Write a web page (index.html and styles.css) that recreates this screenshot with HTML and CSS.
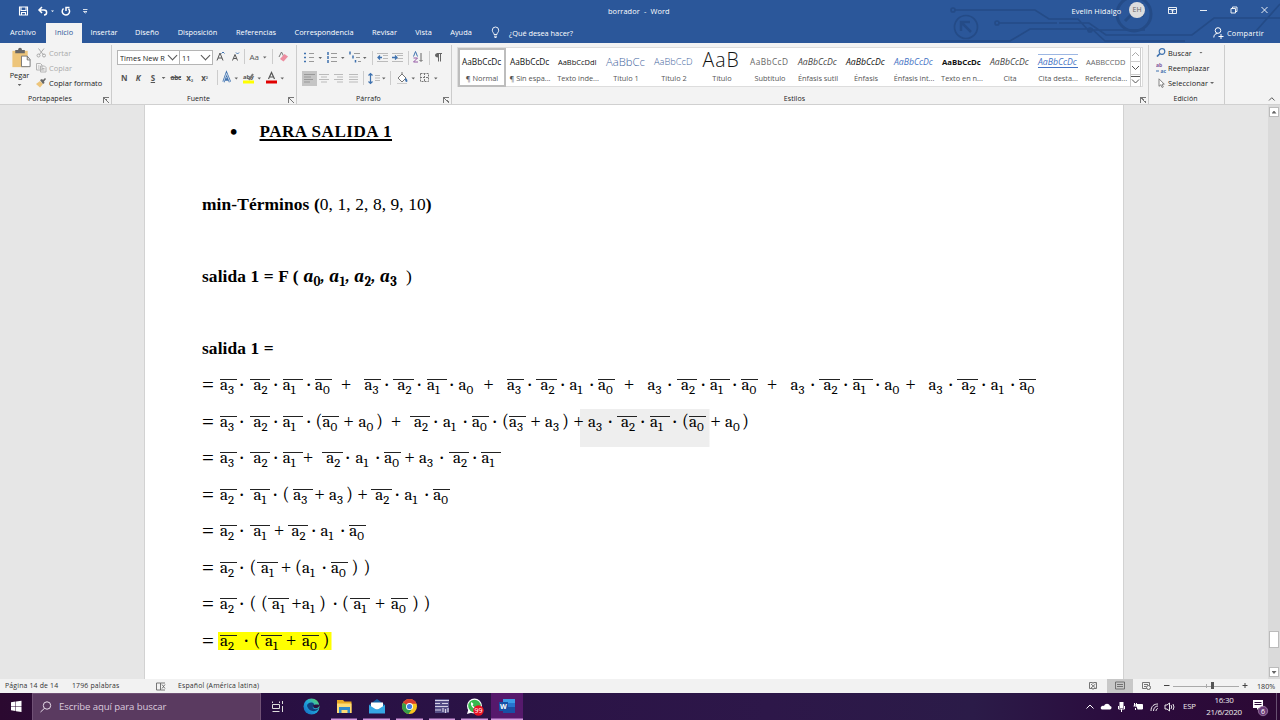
FILE: index.html
```html
<!DOCTYPE html>
<html lang="es">
<head>
<meta charset="utf-8">
<title>borrador - Word</title>
<link rel="stylesheet" href="styles.css">
</head>
<body>
<header class="top">
  <svg class="circuit" width="340" height="43" viewBox="940 0 340 43" fill="none" stroke="#244b87" stroke-width="1.7">
    <path d="M955 10h80l14 9h29l10 11h57M999 23h58M1059 23h30l17 12h86l22-17h66M940 41h70l20-12h62l13 12h80M1248 40l32-36"/>
    <circle cx="953" cy="10" r="2"/><circle cx="997" cy="23" r="2"/><circle cx="1090" cy="30" r="2"/>
    <circle cx="966" cy="27" r="11.500"/><path stroke-width="2.500" d="M971 32l-9-9M961 31v-9h9"/>
    <circle cx="1134" cy="14" r="17" stroke-width="3"/><path stroke-width="3" d="M1125 21l16-16M1130 5h12v12"/>
  </svg>
  <div class="titlebar">
    <svg class="quick" width="90" height="23" fill="none" stroke="#fff" stroke-width="1.100">
      <path d="M11.500 7h8v8h-8zM13 7v3.500h5V7M13.500 15v-2.500h4V15"/>
      <path stroke-width="1.500" d="M34 7l-3 3 3 3M31.500 10H36c3.500 0 3.500 5 0 5"/><path d="M43 10.500h3l-1.500 1.500z" fill="#fff" stroke="none"/>
      <path stroke-width="1.500" d="M55.500 8.500a3.700 3.700 0 1 0 5 .2M58 11V7.500h3.500"/><path stroke-width=".8" d="M75 9.500h4.500M75.500 11.500h3.500l-1.700 1.500z"/>
    </svg>
    <div class="doctitle">borrador&nbsp; -&nbsp; Word</div>
    <div class="user">Evelin Hidalgo</div><div class="avatar">EH</div>
    <svg class="winctl" width="130" height="23" fill="none" stroke="#fff" stroke-width=".9">
      <path d="M18.500 7.500h8v6h-8zM18.500 9.500h8M22.500 13v-3M21 11.500l1.500-1.500 1.500 1.500M50 10.500h7M81 8.500h4.500v4.500H81zM82.500 8.500V7H87v4.500h-1.500M111.500 7l6 6M117.500 7l-6 6"/>
    </svg>
  </div>
  <nav class="tabs">
    <span class="tab t1">Archivo</span><span class="tab on">Inicio</span><span class="tab t3">Insertar</span><span class="tab t4">Diseño</span><span class="tab t5">Disposición</span><span class="tab t6">Referencias</span><span class="tab t7">Correspondencia</span><span class="tab t8">Revisar</span><span class="tab t9">Vista</span><span class="tab t10">Ayuda</span>
    <svg width="9" height="20" fill="none" stroke="#fff" stroke-width=".9"><path d="M3 11.500c0-2-1.700-2-1.700-4.300a3.200 3.200 0 0 1 6.400 0C7.700 9.500 6 9.500 6 11.500zM3 13.200h3M3.500 14.500h2"/></svg>
    <span class="ask">¿Qué desea hacer?</span>
    <svg class="share" width="12" height="20" fill="none" stroke="#fff" stroke-width="1"><circle cx="5" cy="7.500" r="2.800"/><path d="M.8 14.500c0-2.500 1.500-4 3.700-4M5.500 13.500h5M8 11v5"/></svg>
    <span class="comp">Compartir</span>
  </nav>
</header>

<section class="ribbon">
  <div class="group clip">
    <div class="clipbody">
      <div class="paste">
        <svg width="22" height="24" viewBox="0 0 22 24"><path fill="#edc57b" d="M2 4h16v17H2z"/><path fill="#666" d="M5 3h3c0-3 4-3 4 0h3v3.500H5z"/><path fill="#fff" stroke="#777" d="M11.500 9.500h6l3 3.500v7.500h-9zM17.500 9.500v4h3"/></svg>
        <span>Pegar</span><i class="caret"></i>
      </div>
      <div class="cliplist">
        <div class="dim"><svg width="11" height="10" fill="none" stroke="#aaa"><path d="M2.500.5l5 6.500M8 .5L3 7"/><circle cx="2.500" cy="7.500" r="1.500"/><circle cx="8" cy="7.500" r="1.500"/></svg><span>Cortar</span></div>
        <div class="dim"><svg width="11" height="10" fill="#f3f3f3" stroke="#b4b4b4"><path d="M.5.500h4l1.500 1.500v5h-5.500zM4.500 3h4L10 4.500V9H4.500zM6 5.500h2.500M6 7h2.500M2 3h1.500M2 5h1.500"/></svg><span>Copiar</span></div>
        <div><svg width="11" height="10"><path fill="#edc57b" d="M0 6l4-3 3 3-3 3.500z"/><path fill="#666" d="M4 2l2-1 1 1 2-2 1 1-2 2.500.5 1.500L7 6z"/></svg><span>Copiar formato</span></div>
      </div>
    </div>
    <div class="label"><span>Portapapeles</span></div>
  </div>

  <div class="group font">
    <div class="row r1">
      <div class="combo name"><span>Times New R</span></div><div class="combo size"><span>11</span></div>
      <svg width="82" height="17" viewBox="214 50 82 17" fill="none" stroke="#555">
        <path d="M218 61.500l3-7.500 3 7.500M219 59h4M233.500 61.500l2.500-6 2.500 6M234.500 59.500h3"/>
        <path stroke="#3f72af" d="M222.500 54.500l1.500-1.500 1.500 1.500M237 53.500l1.500 1.500 1.500-1.500"/><path stroke="#ccc" d="M245.500 50v15M273.500 50v15"/>
        <path fill="#666" stroke="none" d="M264 57.500h3.500L265.700 59.500z"/><text x="250.500" y="61" class="aa">Aa</text>
        <path stroke="#777" d="M280 58l2.500-5 2 4"/><path fill="#ed8da0" stroke="none" d="M281 60l4.500-5 3.500 2.500-4.500 5z"/>
      </svg>
    </div>
    <div class="row r2">
      <b class="n">N</b><b class="k"><em>K</em></b><b class="s"><u>S</u></b><i class="caret"></i><b class="abc"><s>abc</s></b><b class="x">x<small>₂</small></b><b class="x x2">x<small>²</small></b>
      <svg width="80" height="16" viewBox="216 70 80 16"><path stroke="#ccc" d="M217.500 70v15"/><g fill="none"><path stroke="#3f72af" stroke-width="2.300" d="M223.500 82l3-8.500 3.500 8.500M225 79.500h3.500"/><path stroke="#fff" stroke-width=".7" d="M223.500 82l3-8.500 3.500 8.500"/><path stroke="#555" stroke-width="1.200" d="M268.500 79l3-6.500 3 6.500M270 77h4"/></g><text x="243" y="79" class="ab">aby</text><path stroke="#777" stroke-width="2" d="M249 80l4-6"/><path fill="#ffff00" d="M243 80.500h11v3h-11z"/><path fill="#e00000" d="M266 80.500h11v3h-11z"/><path fill="#666" d="M234.500 77.500h3.500l-1.700 2zM257.500 77.500h3.500l-1.700 2zM280.500 77.500h3.500l-1.700 2z"/></svg>
    </div>
    <div class="label"><span>Fuente</span></div>
  </div>

  <div class="group para">
    <svg class="paraicons" width="154" height="44" viewBox="297 46 154 44" fill="none">
      <path fill="#c5c5c5" d="M302 71h15v15h-15z"/>
      <path stroke="#999" d="M309 53.500h5M309 57.500h5M309 61.500h5M331 53.500h6M331 57.500h6M331 61.500h6M354 53.500h6M356 57.500h4M358 61.500h3"/>
      <path stroke="#3f72af" stroke-width="1.500" d="M304 53.500h2M304 57.500h2M304 61.500h2M328 52v3M328 56v3M328 60v3M350 51.500v3M353 55.500v3M355.500 60v2.500"/>
      <path fill="#666" d="M318.500 57h3.500l-1.700 2zM341 57h3.500l-1.700 2zM363 57h3.500l-1.700 2zM382 77.500h3.500l-1.700 2zM411.500 77.500h3.500l-1.700 2zM434 77.500h3.500l-1.700 2z"/>
      <path stroke="#bbb" d="M377 53.500h11M383 55.500h5M383 58.500h5M377 61.500h11M392 53.500h11M397 55.500h6M397 58.500h6M392 61.500h11"/>
      <path stroke="#3f72af" stroke-width="1.300" d="M382 57.500h-4M380 55.500l-2 2 2 2M392 57.500h5M395 55.500l2 2-2 2"/>
      <path stroke="#ccc" d="M372.500 51v14M408.500 51v14M429.500 51v14M363.500 71v14M390.500 71v14"/>
      <path stroke="#3f72af" d="M413.500 56.500l2-5 2 5"/><path stroke="#9458a5" d="M413.500 58h4l-4 4h4.500"/><path stroke="#666" d="M421 53v8M419.500 60l1.500 1.500 1.500-1.500"/>
      <path stroke="#666" d="M438.500 53.500v8M440.500 53.500v8M437 53.500h5"/><path fill="#666" d="M438 53c-4 0-4 4.500 0 4.500z"/>
      <path stroke="#999" d="M304 74.500h11M304 77h7M304 79.500h9M304 82h6"/>
      <path stroke="#bbb" d="M319 74.500h10M321 77h6M319 79.500h10M321 82h6M334 74.500h9M337 77h6M334 79.500h9M337 82h6M349 74.500h9M349 77h9M349 79.500h9M349 82h9M375 75.500h5M375 78h5M375 80.500h5"/>
      <path stroke="#3f72af" stroke-width="1.200" d="M370.500 74v9M368.500 75.500l2-2 2 2M368.500 81.500l2 2 2-2"/>
      <path fill="#fff" stroke="#777" d="M398 78l4-4 4 4-4 4zM402 74v-2"/><path fill="#3f72af" d="M405 78c2 0 3 3 2 4-2 0-2-2-2-4z"/><path stroke="#ccc" d="M397 83.500h10"/>
      <path stroke="#777" stroke-dasharray="2 1" d="M420.500 73.500h8v8h-8zM424.500 73v9M420 77.500h9"/>
    </svg>
    <div class="label"><span>Párrafo</span></div>
  </div>

  <div class="group styles">
    <div class="gallery">
      <div class="style sel"><p>AaBbCcDc</p><span>¶ Normal</span></div>
      <div class="style"><p>AaBbCcDc</p><span>¶ Sin espa...</span></div>
      <div class="style"><p class="sm">AaBbCcDdI</p><span>Texto inde...</span></div>
      <div class="style"><p class="h1">AaBbCc</p><span>Título 1</span></div>
      <div class="style"><p class="h2">AaBbCcD</p><span>Título 2</span></div>
      <div class="style"><p class="ti">AaB</p><span>Título</span></div>
      <div class="style"><p class="su">AaBbCcD</p><span>Subtítulo</span></div>
      <div class="style"><p class="it gray">AaBbCcDc</p><span>Énfasis sutil</span></div>
      <div class="style"><p class="it">AaBbCcDc</p><span>Énfasis</span></div>
      <div class="style"><p class="it blue">AaBbCcDc</p><span>Énfasis int...</span></div>
      <div class="style"><p class="bo">AaBbCcDc</p><span>Texto en n...</span></div>
      <div class="style"><p class="it gray">AaBbCcDc</p><span>Cita</span></div>
      <div class="style"><p class="it blue lined">AaBbCcDc</p><span>Cita desta...</span></div>
      <div class="style"><p class="ref">AABBCCDD</p><span>Referencia...</span></div>
      <svg width="11" height="40" fill="none" stroke="#555"><path stroke="#ccc" d="M.5 0v39M10.500 0v39M0 13.500h11M0 26.500h11"/><path stroke="#aaa" d="M2 8l3.500-3.500L9 8"/><path d="M2 18l3.500 3.500L9 18M2 31.500L5.500 35 9 31.500M1 28.500h9"/></svg>
    </div>
    <div class="label"><span>Estilos</span></div>
  </div>

  <div class="group edit">
    <div class="editlist">
      <div><svg width="12" height="9" fill="none" stroke="#3f72af" stroke-width="1.200"><circle cx="6" cy="3.500" r="2.800"/><path stroke-width="1.700" d="M4 5.500L1 8.500"/></svg><span>Buscar</span><i class="caret"></i></div>
      <div><svg width="12" height="12"><text x="0" y="5" class="rep">ab</text><text x="4.500" y="10.500" class="rep c2">ac</text><path stroke="#3f72af" d="M0 9h3"/></svg><span>Reemplazar</span></div>
      <div><svg width="12" height="10" fill="#fff" stroke="#777" stroke-width=".9"><path d="M3 .8v7.500l1.800-1.500 1.300 2.700 1.200-.6L6 6.200h2.300z"/></svg><span>Seleccionar</span><i class="caret near"></i></div>
    </div>
    <div class="label"><span>Edición</span></div>
  </div>
  <svg class="collapse" width="14" height="10" fill="none" stroke="#555"><path d="M4 6.500l2.800-2.800L9.600 6.500"/></svg>
</section>

<main class="desk">
  <article class="page">
    <h1><span class="bullet">•</span><u>PARA SALIDA 1</u></h1>
    <p class="line"><b>min-Términos (</b>0, 1, 2, 8, 9, 10<b>)</b></p>
    <p class="line"><b>salida 1 = F (</b> <span class="vars">a<sub>0</sub>, a<sub>1</sub>, a<sub>2</sub>, a<sub>3</sub></span> &nbsp;)</p>
    <p class="line last"><b>salida 1 =</b></p>
    <div id="equations"></div>
  </article>
  <aside class="scroll"><div class="arrow up"></div><div class="thumb"></div><div class="arrow down"></div></aside>
</main>

<footer class="status">
  <span class="pg">Página 14 de 14</span><span class="words">1796 palabras</span>
  <svg width="11" height="13" fill="none" stroke="#666" stroke-width=".9"><path d="M.5 3h4v7h-4zM4.500 3H9M4.500 10H9M6 4.500l3 4M9 4.500l-3 4"/></svg>
  <span class="lang">Español (América latina)</span>
  <svg class="view" width="191" height="14" viewBox="1080 679 191 14" fill="none" stroke="#666"><path fill="#c8c8c8" stroke="none" d="M1107 679h26v14h-26z"/><path stroke-width=".9" d="M1089.500 682.500h3l.5 1 .5-1h3v6h-3l-.5 1-.5-1h-3zM1091 684l4.500 4M1095.500 684l-4.500 4M1115.500 682h9v7h-9zM1117 684.500h6M1117 686.500h6M1142.500 682.500h7v3M1142.500 682.500v6h4M1144 684.500h4M1144 686.500h2"/><circle cx="1148.500" cy="687.500" r="2"/><path stroke="#444" d="M1164 685.500h5.500M1242.500 685.500h5M1245 683v5"/><path stroke="#aaa" d="M1173 686.500h66M1206.500 684v4"/><path stroke="#555" stroke-width="3" d="M1212.500 682v7"/></svg>
  <span class="zoomv">180%</span>
</footer>

<div class="taskbar">
  <svg class="start" width="32" height="27" fill="#fff"><path d="M11 9.300l4.500-.7v4.400H11zM16 8.500l5.500-.8V13H16zM11 13.600h4.500V18l-4.500-.7zM16 13.600h5.500V19l-5.500-.8z"/></svg>
  <div class="search"><svg width="27" height="27" fill="none" stroke="#e8dcea"><circle cx="15" cy="11.500" r="3.700"/><path d="M12.500 14.300L8.500 18"/></svg><span>Escribe aquí para buscar</span></div>
  <svg class="apps" width="270" height="27" viewBox="261 693 270 27">
    <defs><linearGradient id="edge" x1="0" y1="1" x2="1" y2="0"><stop offset="0" stop-color="#1261bd"/><stop offset=".5" stop-color="#20a7dc"/><stop offset="1" stop-color="#65d957"/></linearGradient></defs>
    <path fill="#56196c" d="M491 693h32v27h-32z"/>
    <g fill="none" stroke="#ddd"><path d="M272.500 704.500h7v4h-7zM272.500 703v-1.500M279.500 703v-1.500M272.500 711.500h7M282.500 701v3M282.500 706v6"/></g>
    <circle cx="311.500" cy="706.500" r="8" fill="url(#edge)"/><path fill="#123f7e" d="M307 706c0-3 5-5 7-2 1 2-2 2-1 4 1 1.500 4 1.500 6 0-3 5-10 4-12-2z"/><path fill="#2b103f" d="M313 705c2 0 3-1 6.500 0 0 3-4 4-6 2.500-1-.8.5-1.500-.5-2.500z"/>
    <path fill="#e9a925" d="M337 700h6l1.500 1.500h7V713H337z"/><path fill="#ffdc75" d="M337 703.500h14.500V713H337z"/><path fill="#318acb" d="M339 707h11v6h-2.500v-3h-6v3H339z"/>
    <path fill="#1261a6" d="M369 705l8-6 8 6v8h-16z"/><path fill="#fff" d="M371 702.500h12v7h-12z"/><path fill="#35a7e4" d="M369 705l8 5 8-5v8.500h-16z"/>
    <circle cx="409.500" cy="706.500" r="7.500" fill="#f7c51e"/><path fill="#d93d2e" d="M409.500 706.500L403 702.700a7.500 7.500 0 0 1 13.500 1h-7z"/><path fill="#389c49" d="M409.500 706.500L403 702.700a7.500 7.500 0 0 0 5.500 11.200l3.500-5z"/><circle cx="409.500" cy="706.500" r="3.500" fill="#fff"/><circle cx="409.500" cy="706.500" r="2.600" fill="#437fe5"/>
    <path fill="#554e86" d="M435 699h14v14h-14z"/><path stroke="#d5d0e5" stroke-width="1.200" d="M435 700.500h14M435 703.500h5M442 703.500h6M435 706.500h13M435 710h6M443 712v-4M445.500 713v-4M448 712v-4"/>
    <circle cx="474.500" cy="706" r="7.500" fill="#fff"/><circle cx="474.500" cy="706" r="6.300" fill="#36ba4e"/><path fill="#fff" d="M467 714l1.500-5 3.500 3.500zM471.500 702l2 2-1 1.500 3 2.500 1.500-1 1 2c-3 2-9-4-6.500-7z"/><circle cx="478.500" cy="710.500" r="5.200" fill="#e81123"/><text x="474.500" y="713.300" class="badge">99</text>
    <path fill="#3a9be8" d="M503 699h12v14h-12z"/><path fill="#194fa5" d="M503 706h12v7h-12z"/><path fill="#2674cf" d="M503 703h12v4h-12z"/><path fill="#1551a6" d="M499 702h9v9h-9z"/><text x="500" y="709.300" class="wd">W</text>
    <path fill="#d39add" d="M331 718.500h26v1.500h-26zM363 718.500h27v1.500h-27zM396 718.500h27v1.500h-27zM429 718.500h26v1.500h-26zM461 718.500h27v1.500h-27zM491 718.500h32v1.500h-32z"/>
  </svg>
  <svg class="tray" width="94" height="27" viewBox="1083 693 94 27" fill="none" stroke="#fff"><path d="M1086.500 708.500l3.500-3.500 3.500 3.500"/><path fill="#fff" stroke="none" d="M1101 709c-1-3 2-3.500 3-3 1-3 5-3 6 0 2 0 2 3 0 3.500h-8zM1119.500 702h4v6h-4z"/><path d="M1118.500 706v3h6v-3M1121.500 709v3"/><path fill="#fff" d="M1135.500 704.500h7v4.500h-5"/><path d="M1134.500 703v3M1136.500 703v3M1133.500 706h4M1135.500 708v2"/><path d="M1151 711c0-5 3-7 7-7M1153.500 711c0-3 2-5 4.500-5M1156 711c0-1.500 1-2.500 2-2.500" stroke-width=".9"/><path stroke-width=".9" d="M1165 705h2l2.500-2v8l-2.500-2h-2zM1171 705q1.500 2 0 4M1173 704q2 3 0 6" /></svg>
  <span class="esp">ESP</span>
  <div class="clock"><span>16:30</span><span>21/6/2020</span></div>
  <svg class="notif" width="34" height="27"><path fill="#fff" d="M7 7h10v8h-4l-2 2v-2H7z"/><path stroke="#2c0938" d="M8.500 9.500h7M8.500 11.500h7"/><circle cx="17" cy="18" r="4.700" fill="#6b3b78" stroke="#aa8bb1" stroke-width=".7"/><text x="14.900" y="20.700" class="badge">6</text><path stroke="#675070" d="M30.500 0v27"/></svg>
</div>
<script src="equations.js"></script>
</body>
</html>
```

FILE: styles.css
```css
* { box-sizing: border-box; }
body { margin: 0; width: 1280px; height: 720px; overflow: hidden; font: 7.4px/10px "Open Sans", "Noto Sans", sans-serif; color: #222; display: flex; flex-direction: column; }
svg { display: block; flex: none; }
span, p, b { white-space: nowrap; }
.top { position: relative; height: 43px; flex: none; background: #2b579a; color: #fff; }
.circuit { position: absolute; right: 0; top: 0; }
.titlebar, .tabs { position: relative; display: flex; align-items: center; }
.titlebar { height: 23px; padding-left: 4px; }
.quick { margin-left: 4px; margin-right: -4px; }
.doctitle { margin-left: 514px; width: 467px; padding-bottom: 2px; letter-spacing: .1px; }
.user { width: 53px; padding-bottom: 2px; white-space: nowrap; letter-spacing: .1px; }
.avatar { width: 16px; height: 16px; margin: -3px 0 0 5px; border-radius: 50%; background: #ddd; color: #666; text-align: center; line-height: 16px; font-size: 7px; }
.winctl { margin-left: 5px; }
.tabs { height: 20px; }
.tab { line-height: 19px; height: 20px; text-align: center; width: 42px; flex: none; }
.t1 { width: 46px; }
.on { width: 36px; background: #f3f3f3; color: #2b579a; }
.t3 { width: 44px; } .t4 { width: 42px; } .t5 { width: 59px; } .t6 { width: 58px; } .t7 { width: 78px; } .t8 { width: 43px; } .t9 { width: 35px; } .t10 { width: 40px; margin-right: 10px; }
.ask { margin-left: 9px; width: 704px; padding-bottom: 1px; letter-spacing: -.03px; }
.share { margin-right: 2px; }
.comp { letter-spacing: .2px; padding-bottom: 1px; }

.ribbon { height: 62px; flex: none; background: #f3f3f3; border-bottom: 1px solid #d0d0d0; display: flex; }
.group { display: flex; flex-direction: column; border-right: 1px solid #ccc; margin: 2px 0 0; height: 59px; flex: none; }
.label { margin-top: auto; height: 10px; text-align: center; padding-right: 11px; font-size: 7px; position: relative; letter-spacing: .08px; }
.label::after { content: ""; position: absolute; right: 2px; top: 3px; width: 5px; height: 5px; border-left: 1px solid #777; border-top: 1px solid #777; background: linear-gradient(45deg, transparent 45%, #777 45% 60%, transparent 60%); }
.clip { width: 112px; } .font { width: 185px; } .para { width: 155px; } .styles { width: 697px; } .edit { width: 76px; }
.caret { display: block; width: 4px; height: 2px; background: #666; clip-path: polygon(0 0, 100% 0, 50% 100%); }
.clipbody { display: flex; }
.paste { width: 39px; display: flex; flex-direction: column; align-items: center; padding-top: 2px; }
.paste svg { margin-left: 3px; height: 23px; }
.paste .caret { margin-top: 4px; }
.cliplist > div { display: flex; align-items: center; height: 15.400px; gap: 2px; font-size: 7.500px; }
.cliplist svg { margin-left: -3px; }
.cliplist .dim { color: #aaa; }
.row { display: flex; align-items: center; padding-left: 5px; }
.r1 { height: 25px; } .r2 { height: 16px; }
.combo { height: 15px; border: 1px solid #b5b5b5; background: #fff; display: flex; align-items: center; justify-content: space-between; padding: 0 3px 0 2px; }
.combo::after { content: ""; width: 6px; height: 6px; border: solid #555; border-width: 0 1px 1px 0; transform: translateY(-2px) rotate(45deg); }
.name { width: 63px; } .size { width: 34px; margin-left: -1px; }
.name span { width: 46px; overflow: hidden; letter-spacing: .05px; }
.aa { font: 8px "Open Sans"; fill: #555; stroke: none; }
.ab { font: bold 6px "Open Sans"; fill: #555; }
.r2 b { font-size: 8px; color: #555; }
.r2 .n { margin-left: 4px; width: 15px; } .k { width: 15px; } .s { width: 10px; } .abc { margin-left: 5px; width: 16px; } .r2 .abc { font-size: 6.500px; letter-spacing: -.3px; } .x { width: 15px; } .x small { font-size: 6px; }
.r2 .caret { margin-left: 1px; }
.paraicons { margin-top: 1px; }
.gallery { margin: 2px 0 0 5px; width: 686px; height: 40px; background: #fff; border: 1px solid #ddd; display: flex; }
.style { width: 48px; height: 39px; text-align: center; flex: none; display: flex; flex-direction: column; align-items: center; color: #555; letter-spacing: -.02px; }
.style p { margin: 0; height: 24px; width: 40px; line-height: 28px; font-size: 8.300px; color: #111; text-align: left; }
.style span { line-height: 12px; }
.sel { box-shadow: inset 0 0 0 2px #bdbdbd; }
.style .sm { font-size: 7.500px; } .style .h1 { font-size: 11.300px; color: #3f669e; font-weight: 300; } .style .h2 { font-size: 9.300px; color: #3f669e; font-weight: 300; }
.style .ti { font-size: 19.500px; line-height: 24px; font-weight: 300; letter-spacing: 1px; width: 39px; } .style .su { color: #666; letter-spacing: .4px; } .it { font-style: italic; } .style .it { font-size: 8.700px; } .style .gray { color: #444; } .style .blue { color: #4472c4; } .bo { font-weight: bold; } .style .bo { font-size: 7.800px; } .style .ref { font-size: 7.500px; color: #666; }
.style .lined { height: 14px; line-height: 15px; margin: 6px 0 4px; border-top: 1px solid #9db7e3; border-bottom: 1px solid #4472c4; }
.editlist > div { display: flex; align-items: center; height: 15.200px; }
.editlist svg { margin-left: 7px; }
.editlist .caret { margin-left: 7px; } .editlist .near { margin-left: 2px; }
.editlist span { letter-spacing: .07px; }
.rep { font: bold 5px "Open Sans"; fill: #80569b; } .c2 { fill: #3f72af; }
.edit .label { padding-right: 2px; } .edit .label::after { display: none; }
.collapse { margin: 51px 0 0 40px; }

.desk { height: 574px; flex: none; background: #e6e6e6; display: flex; padding-left: 144px; }
.page { width: 980px; background: #fff; border: solid #d2d2d2; border-width: 0 1px; padding: 17px 0 0 57px; font: 17.400px/20px "Liberation Serif", serif; color: #000; }
.page h1 { font-size: 17.100px; line-height: 20px; margin: 0 0 52px 28px; height: 20px; display: flex; letter-spacing: .5px; }
.bullet { width: 29.500px; font-size: 21px; }
.page u { text-underline-offset: 2px; text-decoration-thickness: 1.500px; }
.line { margin: -.5px 0 52.500px; height: 20px; letter-spacing: .1px; }
.line.last { margin-bottom: 17px; }
.vars { font: italic bold 18px/20px Cambria, Caladea, "Liberation Serif", serif; letter-spacing: .25px; }
.vars sub { font-style: normal; font-size: 13px; line-height: 0; vertical-align: -4px; letter-spacing: .3px; }
.eq { height: 20px; margin-bottom: 16.570px; display: flex; font: 17px/20px Cambria, Caladea, "Liberation Serif", serif; }
.eq > span { flex: none; white-space: nowrap; height: 20px; }
.eq .equal { font: 21px/21px "Liberation Serif", serif; }
.eq .plus { font: 18px/20px "Liberation Serif", serif; }
.eq .dot { font-weight: bold; padding-left: .5px; }
.eq .paren { font-size: 18px; line-height: 20px; }
.term i { font-style: normal; display: inline-block; height: 20px; position: relative; }
.term sub { font-size: 13px; line-height: 0; vertical-align: -4px; }
.bar i::before { content: ""; position: absolute; left: 0; right: 0; top: 4px; border-top: 1px solid #222; }
.narrow i { width: 17px; } .lead i { width: 20.500px; padding-left: 4px; } .trail i { width: 20px; }
.hl { background: linear-gradient(#ff0, #ff0) 15.500px 1px / 113.500px 18px no-repeat; }
.shade { background: linear-gradient(#eee, #eee) 378px 0 / 129.500px 38px no-repeat; height: 40.500px; margin-top: -2.500px; padding-top: 3px; margin-bottom: -.930px; }
.scroll { width: 12px; margin-left: auto; padding: 2px 1px 0; background: #dadada; display: flex; flex-direction: column; align-items: center; }
.arrow { width: 10px; height: 10px; background: #fff; border: 1px solid #bbb; flex: none; display: grid; place-items: center; }
.arrow::after { content: ""; width: 5px; height: 3px; background: #666; clip-path: polygon(50% 0, 100% 100%, 0 100%); }
.down::after { transform: scaleY(-1); }
.thumb { width: 10px; height: 17px; margin: 514px 0 19px; border: 1px solid #bbb; background: #fff; flex: none; }

.status { height: 14px; flex: none; background: #f2f2f2; display: flex; align-items: center; padding-left: 5px; color: #333; font-size: 6.900px; letter-spacing: .17px; }
.pg { width: 67px; } .words { width: 84px; } .lang { margin-left: 11px; }
.view { margin-left: auto; margin-right: -14px; } .zoomv { width: 23px; font-size: 7.200px; letter-spacing: 0; }
.taskbar { height: 27px; flex: none; display: flex; background: linear-gradient(90deg, #2b0930, #291044 25%, #2d1749 60%, #2b1b48 76%, #2b0b3d 88%, #2c0934); color: #eee; }
.search { width: 229px; background: #5a3a60; display: flex; align-items: center; font-size: 9.600px; letter-spacing: -.1px; color: #dacbdd; border: 1px solid #705175; border-bottom: 0; }
.search svg { margin-left: -1px; }
.badge { font: 7px "Open Sans"; fill: #fff; } .wd { font: bold 7px "Open Sans"; fill: #fff; }
.tray { margin-left: 552px; }
.esp { margin-left: 6px; width: 22px; font-size: 7.800px; line-height: 27px; letter-spacing: -.2px; }
.clock { width: 38px; display: flex; flex-direction: column; align-items: center; font-size: 8px; line-height: 12px; padding-top: 1px; letter-spacing: -.25px; }
.notif { margin-left: 3px; }
```

FILE: equations.js
```js
// Each token is "symbol@start". n = barred, l = bar with leading space,
// t = bar with trailing space, a = plain variable.
const rows = [
  "=@202 n3@220 ·@240 l2@249.5 ·@274 t1@282.7 ·@307 n0@315 +@341 n3@364.500 ·@385 l2@393.500 ·@417.500 t1@427 ·@450 a0@458.500 +@483.500 n3@507 ·@528 l2@536.500 ·@561 a1@569.500 ·@590 n0@598 +@624 a3@647.500 ·@668 l2@677 ·@701.500 t1@710 ·@733 n0@741.500 +@767 a3@790.500 ·@811 l2@819.500 ·@844 t1@852.700 ·@876 a0@884.500 +@905.500 a3@928.500 ·@949 l2@957.500 ·@982 a1@990.700 ·@1011 n0@1019.500",
  "=@202 n3@220 ·@240 l2@249.5 ·@274 t1@282.7 ·@307 (@315.500 n0@322.500 +@343.500 a0@358.500 )@376 +@391 l2@410 ·@434 a1@443 ·@463.500 n0@472 ·@493 (@502 n3@509 +@530.500 a3@545 )@562 +@573.500 a3@588 ·@608.500 l2@617 ·@641 t1@650 ·@673 (@682 n0@689 +@710.500 a0@725 )@742",
  "=@202 n3@220 ·@240 l2@249.5 ·@274 t1@282.7 +@303 l2@322.300 ·@346 a1@355.500 ·@376 n0@384.300 +@404.500 a3@419 ·@440 l2@449 ·@473 t1@481.500",
  "=@202 n2@220 ·@240 l1@249.5 ·@273.500 (@282.500 t3@293.300 +@314.500 a3@329 )@346 +@357.500 l2@371.300 ·@395.500 a1@404.500 ·@425 n0@433.300",
  "=@202 n2@220 ·@240 l1@249.5 +@274 l2@287.500 ·@312 a1@320.500 ·@341 n0@349.300",
  "=@202 n2@220 ·@240 (@249.500 l1@257 +@281 (@295 a1@302 ·@322.500 n0@331 )@351.500 )@363.500",
  "=@202 n2@220 ·@240 (@249.500 (@261 l1@268 +@291.500 a1@302 )@319 ·@333.500 (@342 l1@349.500 +@375 n0@391 )@412 )@423.500",
  "=@202 n2@220 ·@244.500 (@253.500 l1@261 +@286 n0@302 )@322.500"
];
const kinds = { n: "term bar narrow", l: "term bar lead", t: "term bar trail", a: "term" };
const ops = { "=": "equal", "+": "plus", "·": "dot", "(": "paren", ")": "paren" };
document.getElementById("equations").innerHTML = rows.map((row, r) => {
  const tokens = row.split(" ").map(t => t.split("@"));
  const cells = tokens.map(([sym, x], i) => {
    const width = (i + 1 < tokens.length ? tokens[i + 1][1] - x : 22).toFixed(1);
    const kind = kinds[sym[0]];
    const body = kind ? `<i>a<sub>${sym[1]}</sub></i>` : sym;
    return `<span class="${kind || ops[sym]}" style="width:${width}px">${body}</span>`;
  }).join("");
  return `<div class="eq${r === 1 ? " shade" : r === 7 ? " hl" : ""}">${cells}</div>`;
}).join("");
```
